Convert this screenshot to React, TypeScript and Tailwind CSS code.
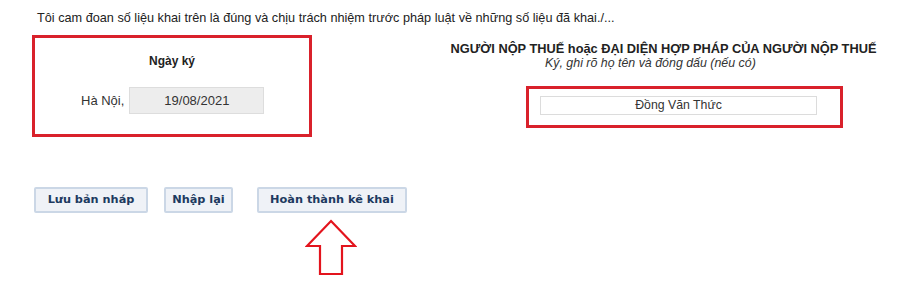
import React from 'react';

const UpArrow: React.FC = () => (
    <svg width="52" height="58" viewBox="0 0 52 58" className="block">
        <path
            d="M26 2 L50 27 L37 27 L37 55 L15 55 L15 27 L2 27 Z"
            fill="white"
            stroke="#e3141d"
            strokeWidth="2.2"
            strokeLinejoin="miter"
        />
    </svg>
);

const ActionButton: React.FC<{ label: string; className?: string }> = ({ label, className }) => (
    <button
        className={`h-[26px] rounded-[2px] border-2 border-[#cbd7e6] bg-[#eff2f7] text-[11.3px] font-bold text-[#1d3a60] ${className ?? ''}`}
        style={{ fontFamily: '"DejaVu Sans", Verdana, sans-serif' }}
    >
        {label}
    </button>
);

export default function App() {
    return (
        <div
            className="w-[900px] h-[284px] bg-white text-[#222] overflow-hidden"
            style={{ fontFamily: '"Liberation Sans", Arial, sans-serif' }}
        >
            {/* Declaration */}
            <p className="pl-[37px] pt-[11px] text-[12.7px] leading-[15px] whitespace-nowrap">
                Tôi cam đoan số liệu khai trên là đúng và chịu trách nhiệm trước pháp luật về những số liệu đã khai./...
            </p>

            <div className="flex mt-[9px]">
                {/* Signing date */}
                <div className="ml-[32px] w-[280px] h-[102px] border-[3px] border-[#d9212b] flex flex-col items-center">
                    <div className="mt-[16px] text-[12px] font-bold leading-[14px]">Ngày ký</div>
                    <div className="mt-[19px] flex items-center w-full pl-[46px]">
                        <span className="text-[13px] text-[#333]">Hà Nội,</span>
                        <div className="ml-[5px] w-[135px] h-[27px] bg-[#ededed] border border-[#dddddd] flex items-center justify-center text-[13px] text-[#333]">
                            19/08/2021
                        </div>
                    </div>
                </div>

                {/* Taxpayer */}
                <div className="ml-[138px] mt-[7px] flex flex-col items-start">
                    <div className="w-[427px] whitespace-nowrap text-center text-[12.8px] font-bold leading-[14px]">
                        NGƯỜI NỘP THUẾ hoặc ĐẠI DIỆN HỢP PHÁP CỦA NGƯỜI NỘP THUẾ
                    </div>
                    <div className="ml-[95px] whitespace-nowrap text-[12.4px] italic leading-[14px] text-[#333]">
                        Ký, ghi rõ họ tên và đóng dấu (nếu có)
                    </div>
                    <div className="ml-[76px] mt-[16px] w-[317px] h-[42px] border-[3px] border-[#d9212b] pl-[11px] pt-[7px]">
                        <div className="w-[277px] h-[19px] border border-[#dcdcdc] bg-white flex items-center justify-center text-[12.3px] text-[#333]">
                            Đồng Văn Thức
                        </div>
                    </div>
                </div>
            </div>

            {/* Actions */}
            <div className="flex mt-[50px] ml-[34px]">
                <ActionButton label="Lưu bản nháp" className="w-[114px]" />
                <ActionButton label="Nhập lại" className="w-[69px] ml-[16px]" />
                <ActionButton label="Hoàn thành kê khai" className="w-[150px] ml-[24px]" />
            </div>
            <div className="ml-[305px] mt-[6px]">
                <UpArrow />
            </div>
        </div>
    );
}
